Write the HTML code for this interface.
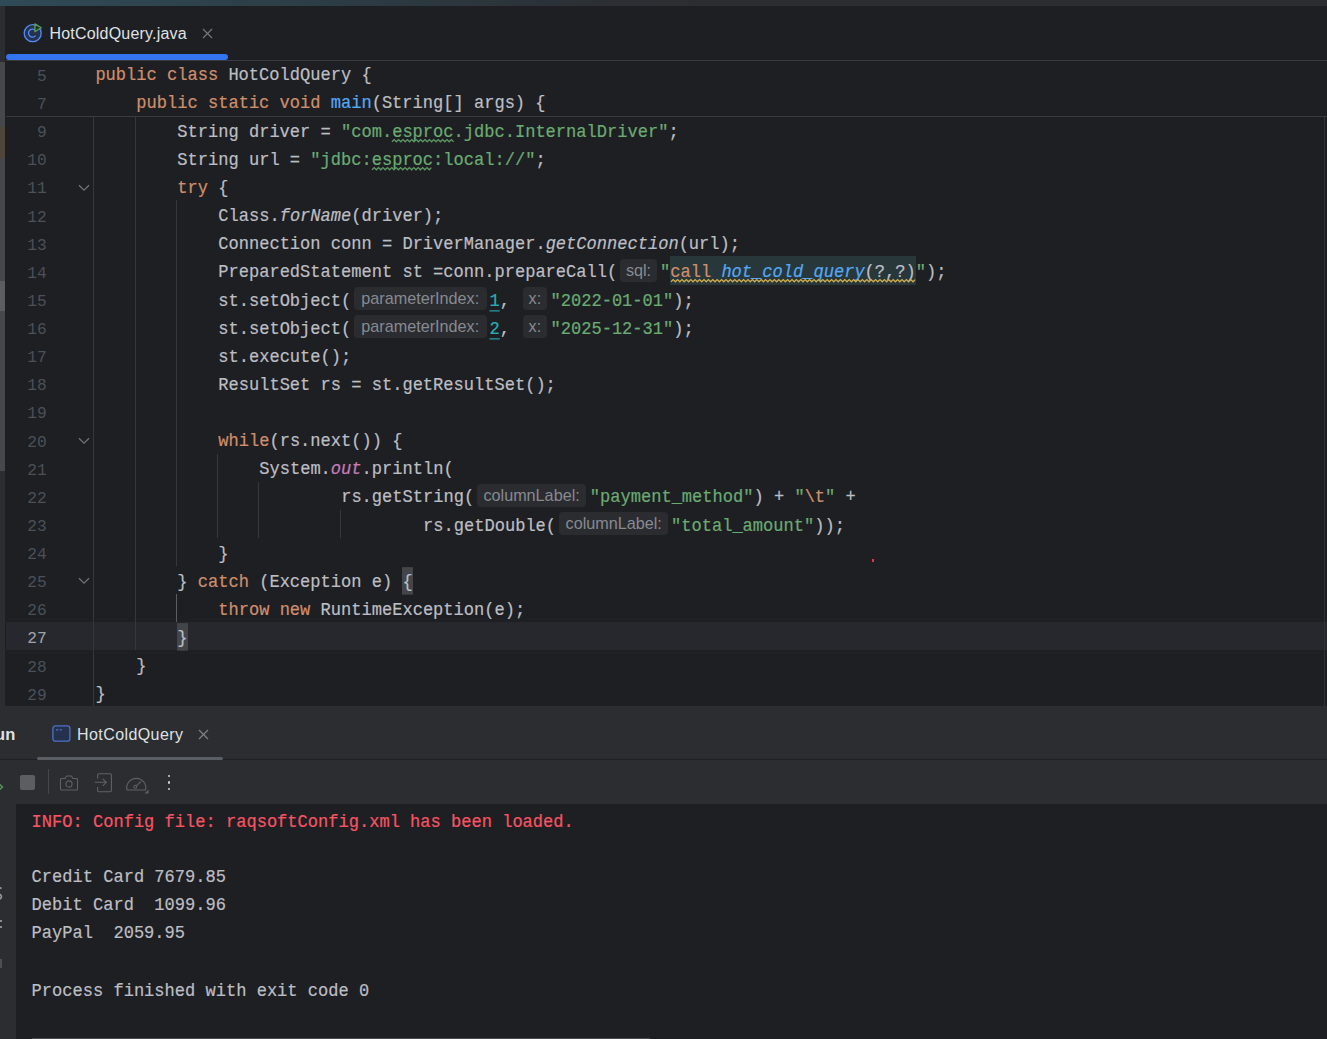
<!DOCTYPE html>
<html><head><meta charset="utf-8">
<style>
*{margin:0;padding:0;box-sizing:border-box}
html,body{width:1327px;height:1039px;overflow:hidden;background:#1e1f22}
body{position:relative;font-family:"Liberation Sans",sans-serif}
.abs{position:absolute}
#top{position:absolute;left:0;top:0;width:1327px;height:6px;background:linear-gradient(90deg,#2f4b57 0,#2d3e46 300px,#2b2f33 620px,#2b2d30 800px)}
#tabs{position:absolute;left:6px;top:6px;width:1321px;height:55px;background:#1e1f22;border-bottom:1px solid #393b40}
#tabbar{position:absolute;left:6px;top:54px;width:222px;height:6px;background:#3574f0;border-radius:3px}
#tabtext{position:absolute;left:49.5px;top:23px;letter-spacing:0.2px;font-size:16px;color:#dfe1e5;line-height:22px;white-space:pre}
#editor{position:absolute;left:0px;top:61px;width:1327px;height:645px;background:#1e1f22;overflow:hidden}
.row{position:absolute;left:6px;width:1321px;height:28.125px}
.row.cur{background:#26282e}
.ln{position:absolute;left:0;top:3.4px;width:40.8px;text-align:right;font-family:"Liberation Mono",monospace;font-size:16.2px;line-height:28.125px;color:#4b5059;transform:scaleY(1.07);transform-origin:0 18.6px}
.row.cur .ln{color:#a1a3ab}
.seg{position:absolute;top:3.1px;height:28.125px;white-space:pre;font-family:"Liberation Mono",monospace;font-size:17.06px;line-height:28.125px;color:#bcbec4;transform:scaleY(1.1);transform-origin:0 18.6px;-webkit-text-stroke:0.2px currentColor}
.k{color:#cf8e6d} .s{color:#6aab73} .f{color:#56a8f5} .i{font-style:italic} .p{color:#c77dbb;font-style:italic} .n{color:#2aacb8;text-decoration:underline;text-decoration-thickness:1px;text-underline-offset:3.5px}
.fi{color:#56a8f5;font-style:italic}
.bh{background:#43454a;display:inline-block;height:25.5px;vertical-align:top;margin-top:-0.2px}
.typo{text-decoration:underline wavy #6f8f72;text-decoration-thickness:1px;text-underline-offset:4px}
.wv{text-decoration:underline wavy #c9a84a;text-decoration-thickness:1px;text-underline-offset:4px}
.inl{position:absolute;margin-left:-6px;top:2.6px;height:22.8px;border-radius:4px;background:#2b2c30;color:#868a91;font-size:16.2px;line-height:23px;text-align:center;white-space:pre}
.inj{position:absolute;margin-left:-6px;top:0;height:28.2px;background:#283739}
.g{position:absolute;width:1px}
.chev{position:absolute;left:77.8px}
#sticky{position:absolute;left:0;top:0;width:1327px;height:56px;background:#1e1f22;border-bottom:1px solid #393b40}
#lstrip{position:absolute;left:0;top:6px;width:5px;height:700px;background:linear-gradient(180deg,#2b2d30 0,#2b2d30 55.7px,#46484c 55.7px,#46484c 121px,#4f473a 121px,#4f473a 151.5px,#46484c 151.5px,#46484c 274.7px,#5b5d61 274.7px,#5b5d61 305.5px,#46484c 305.5px,#46484c 465px,#2b2d30 465px)}
#lgap{position:absolute;left:5px;top:6px;width:1px;height:700px;background:#1e1f22}
#vscroll{position:absolute;left:1324px;top:117px;width:1px;height:589px;background:#303236}
#tw{position:absolute;left:0;top:706px;width:1327px;height:98px;background:#2b2d30}
#console{position:absolute;left:16px;top:804px;width:1311px;height:235px;background:#1e1f22}
#hscroll{position:absolute;left:32px;top:1037.5px;width:618px;height:1.5px;background:#4a4b4f}
.twtxt{position:absolute;font-size:16px;color:#dfe1e5;line-height:22px;white-space:pre}
#cstrip{position:absolute;left:0;top:804px;width:16px;height:235px;background:#2b2d30}
.cl{position:absolute;left:15.6px;white-space:pre;font-family:"Liberation Mono",monospace;font-size:17.06px;line-height:28.125px;color:#bcbec4;transform:scaleY(1.1);transform-origin:0 18.6px;-webkit-text-stroke:0.2px currentColor}
.cl.red{color:#f75464}
</style></head><body>
<div id="top"></div>
<div id="tabs"></div>
<svg class="abs" style="left:22px;top:21px" width="22" height="22" viewBox="0 0 22 22">
<circle cx="10.7" cy="12.2" r="8.5" fill="#25324d" stroke="#548af7" stroke-width="1.3"/>
<path d="M13.6 9.6 A4 4 0 1 0 13.6 14.6" fill="none" stroke="#548af7" stroke-width="1.3"/>
<path d="M12.9 2.9 L19.3 6.8 L12.9 10.7 Z" fill="#223425" stroke="#5a9e5e" stroke-width="1.3" stroke-linejoin="round"/>
</svg>
<div id="tabtext">HotColdQuery.java</div>
<svg class="abs" style="left:202px;top:28px" width="11" height="11" viewBox="0 0 11 11"><path d="M1 1L10 10M10 1L1 10" stroke="#76787d" stroke-width="1.1"/></svg>
<div id="tabbar"></div>
<div id="editor">
<div style="position:absolute;left:0;top:-61px;width:1327px;height:706px">
<div class="row" style="top:115.75px"><div class="ln">9</div><div class="seg" style="left:171.32px">String driver = <span class="s">"com.</span><span class="s">esproc</span><span class="s">.jdbc.InternalDriver"</span>;</div></div><div class="row" style="top:143.875px"><div class="ln">10</div><div class="seg" style="left:171.32px">String url = <span class="s">"jdbc:</span><span class="s">esproc</span><span class="s">:local://"</span>;</div></div><div class="row" style="top:172.0px"><div class="ln">11</div><div class="seg" style="left:171.32px"><span class="k">try</span> {</div></div><div class="row" style="top:200.125px"><div class="ln">12</div><div class="seg" style="left:212.28px">Class.<span class="i">forName</span>(driver);</div></div><div class="row" style="top:228.25px"><div class="ln">13</div><div class="seg" style="left:212.28px">Connection conn = DriverManager.<span class="i">getConnection</span>(url);</div></div><div class="row" style="top:256.375px"><div class="ln">14</div><div class="seg" style="left:212.28px">PreparedStatement st =conn.prepareCall(</div><div class="inl" style="left:620px;width:37px">sql:</div><div class="inj" style="left:670.2px;width:245.8px"></div><div class="seg" style="left:654.00px"><span class="s">"</span><span class="k">call</span> <span class="fi">hot_cold_query</span>(?,?)<span class="s">"</span>);</div></div><div class="row" style="top:284.5px"><div class="ln">15</div><div class="seg" style="left:212.28px">st.setObject(</div><div class="inl" style="left:354px;width:132.5px">parameterIndex:</div><div class="seg" style="left:483.50px"><span class="n">1</span>, </div><div class="inl" style="left:523px;width:23.7px">x:</div><div class="seg" style="left:544.50px"><span class="s">"2022-01-01"</span>);</div></div><div class="row" style="top:312.625px"><div class="ln">16</div><div class="seg" style="left:212.28px">st.setObject(</div><div class="inl" style="left:354px;width:132.5px">parameterIndex:</div><div class="seg" style="left:483.50px"><span class="n">2</span>, </div><div class="inl" style="left:523px;width:23.7px">x:</div><div class="seg" style="left:544.50px"><span class="s">"2025-12-31"</span>);</div></div><div class="row" style="top:340.75px"><div class="ln">17</div><div class="seg" style="left:212.28px">st.execute();</div></div><div class="row" style="top:368.875px"><div class="ln">18</div><div class="seg" style="left:212.28px">ResultSet rs = st.getResultSet();</div></div><div class="row" style="top:397.0px"><div class="ln">19</div></div><div class="row" style="top:425.125px"><div class="ln">20</div><div class="seg" style="left:212.28px"><span class="k">while</span>(rs.next()) {</div></div><div class="row" style="top:453.25px"><div class="ln">21</div><div class="seg" style="left:253.24px">System.<span class="p">out</span>.println(</div></div><div class="row" style="top:481.375px"><div class="ln">22</div><div class="seg" style="left:335.16px">rs.getString(</div><div class="inl" style="left:477.2px;width:108.8px">columnLabel:</div><div class="seg" style="left:583.80px"><span class="s">"payment_method"</span>) + <span class="s">"</span><span class="k">\t</span><span class="s">"</span> +</div></div><div class="row" style="top:509.5px"><div class="ln">23</div><div class="seg" style="left:417.08px">rs.getDouble(</div><div class="inl" style="left:559.3px;width:108.8px">columnLabel:</div><div class="seg" style="left:665.00px"><span class="s">"total_amount"</span>));</div></div><div class="row" style="top:537.625px"><div class="ln">24</div><div class="seg" style="left:212.28px">}</div></div><div class="row" style="top:565.75px"><div class="ln">25</div><div class="seg" style="left:171.32px">} <span class="k">catch</span> (Exception e) <span class="bh">{</span></div></div><div class="row" style="top:593.875px"><div class="ln">26</div><div class="seg" style="left:212.28px"><span class="k">throw new </span>RuntimeException(e);</div></div><div class="row cur" style="top:622.0px"><div class="ln">27</div><div class="seg" style="left:171.32px"><span class="bh">}</span></div></div><div class="row" style="top:650.125px"><div class="ln">28</div><div class="seg" style="left:130.36px">}</div></div><div class="row" style="top:678.25px"><div class="ln">29</div><div class="seg" style="left:89.40px">}</div></div>
<div class="g" style="left:92.5px;top:117px;height:589px;background:#35373b"></div><div class="g" style="left:134.7px;top:117px;height:533px;background:#35373b"></div><div class="g" style="left:175.6px;top:200px;height:366px;background:#35373b"></div><div class="g" style="left:175.6px;top:594px;height:28px;background:#5b5e63"></div><div class="g" style="left:216.5px;top:454px;height:84px;background:#35373b"></div><div class="g" style="left:257.5px;top:482px;height:56px;background:#35373b"></div><div class="g" style="left:340px;top:510px;height:28px;background:#35373b"></div>
<svg class="chev" style="top:183.5px" width="12" height="8" viewBox="0 0 12 8"><path d="M1 1.2 L6 6.2 L11 1.2" fill="none" stroke="#6f737a" stroke-width="1.3"/></svg><svg class="chev" style="top:436.625px" width="12" height="8" viewBox="0 0 12 8"><path d="M1 1.2 L6 6.2 L11 1.2" fill="none" stroke="#6f737a" stroke-width="1.3"/></svg><svg class="chev" style="top:577.25px" width="12" height="8" viewBox="0 0 12 8"><path d="M1 1.2 L6 6.2 L11 1.2" fill="none" stroke="#6f737a" stroke-width="1.3"/></svg>
<svg class="abs" style="left:392px;top:139.15px;overflow:visible" width="62.0" height="3.4"><path d="M0.00 2.80 L2.20 0.60 L4.40 2.80 L6.60 0.60 L8.80 2.80 L11.00 0.60 L13.20 2.80 L15.40 0.60 L17.60 2.80 L19.80 0.60 L22.00 2.80 L24.20 0.60 L26.40 2.80 L28.60 0.60 L30.80 2.80 L33.00 0.60 L35.20 2.80 L37.40 0.60 L39.60 2.80 L41.80 0.60 L44.00 2.80 L46.20 0.60 L48.40 2.80 L50.60 0.60 L52.80 2.80 L55.00 0.60 L57.20 2.80 L59.40 0.60 L61.60 2.80" fill="none" stroke="#5e9a65" stroke-width="1.3"/></svg><svg class="abs" style="left:371.5px;top:167.28px;overflow:visible" width="61.5" height="3.4"><path d="M0.00 2.80 L2.20 0.60 L4.40 2.80 L6.60 0.60 L8.80 2.80 L11.00 0.60 L13.20 2.80 L15.40 0.60 L17.60 2.80 L19.80 0.60 L22.00 2.80 L24.20 0.60 L26.40 2.80 L28.60 0.60 L30.80 2.80 L33.00 0.60 L35.20 2.80 L37.40 0.60 L39.60 2.80 L41.80 0.60 L44.00 2.80 L46.20 0.60 L48.40 2.80 L50.60 0.60 L52.80 2.80 L55.00 0.60 L57.20 2.80 L59.40 0.60" fill="none" stroke="#5e9a65" stroke-width="1.3"/></svg><svg class="abs" style="left:670.5px;top:279.17px;overflow:visible" width="244.5" height="3.4"><path d="M0.00 2.80 L2.20 0.60 L4.40 2.80 L6.60 0.60 L8.80 2.80 L11.00 0.60 L13.20 2.80 L15.40 0.60 L17.60 2.80 L19.80 0.60 L22.00 2.80 L24.20 0.60 L26.40 2.80 L28.60 0.60 L30.80 2.80 L33.00 0.60 L35.20 2.80 L37.40 0.60 L39.60 2.80 L41.80 0.60 L44.00 2.80 L46.20 0.60 L48.40 2.80 L50.60 0.60 L52.80 2.80 L55.00 0.60 L57.20 2.80 L59.40 0.60 L61.60 2.80 L63.80 0.60 L66.00 2.80 L68.20 0.60 L70.40 2.80 L72.60 0.60 L74.80 2.80 L77.00 0.60 L79.20 2.80 L81.40 0.60 L83.60 2.80 L85.80 0.60 L88.00 2.80 L90.20 0.60 L92.40 2.80 L94.60 0.60 L96.80 2.80 L99.00 0.60 L101.20 2.80 L103.40 0.60 L105.60 2.80 L107.80 0.60 L110.00 2.80 L112.20 0.60 L114.40 2.80 L116.60 0.60 L118.80 2.80 L121.00 0.60 L123.20 2.80 L125.40 0.60 L127.60 2.80 L129.80 0.60 L132.00 2.80 L134.20 0.60 L136.40 2.80 L138.60 0.60 L140.80 2.80 L143.00 0.60 L145.20 2.80 L147.40 0.60 L149.60 2.80 L151.80 0.60 L154.00 2.80 L156.20 0.60 L158.40 2.80 L160.60 0.60 L162.80 2.80 L165.00 0.60 L167.20 2.80 L169.40 0.60 L171.60 2.80 L173.80 0.60 L176.00 2.80 L178.20 0.60 L180.40 2.80 L182.60 0.60 L184.80 2.80 L187.00 0.60 L189.20 2.80 L191.40 0.60 L193.60 2.80 L195.80 0.60 L198.00 2.80 L200.20 0.60 L202.40 2.80 L204.60 0.60 L206.80 2.80 L209.00 0.60 L211.20 2.80 L213.40 0.60 L215.60 2.80 L217.80 0.60 L220.00 2.80 L222.20 0.60 L224.40 2.80 L226.60 0.60 L228.80 2.80 L231.00 0.60 L233.20 2.80 L235.40 0.60 L237.60 2.80 L239.80 0.60 L242.00 2.80 L244.20 0.60" fill="none" stroke="#d1ae4e" stroke-width="1.3"/></svg>
</div>
<div id="sticky"><div style="position:absolute;left:0;top:-61px"><div class="row" style="top:59.3px"><div class="ln">5</div><div class="seg" style="left:89.40px"><span class="k">public class </span>HotColdQuery {</div></div><div class="row" style="top:87.3px"><div class="ln">7</div><div class="seg" style="left:130.36px"><span class="k">public static void </span><span class="f">main</span>(String[] args) {</div></div></div></div>
</div>
<div id="vscroll"></div>
<div id="lstrip"></div><div id="lgap"></div>
<div class="abs" style="left:871.7px;top:558.8px;width:2.8px;height:3.2px;background:#e8353f"></div>
<div id="tw"></div>
<div class="abs" style="left:0;top:759px;width:1327px;height:1px;background:#1e1f22"></div>
<div class="abs twtxt" style="left:-16.8px;top:722.7px;font-weight:bold;font-size:16.5px">Run</div>
<svg class="abs" style="left:52px;top:725px" width="19" height="17" viewBox="0 0 19 17"><rect x="0.9" y="0.9" width="17" height="15.3" rx="2.5" fill="#25324d" stroke="#4c71c7" stroke-width="1.3"/><rect x="4" y="4.2" width="2.2" height="1.3" fill="#4c71c7"/><rect x="7.6" y="4.2" width="2.2" height="1.3" fill="#4c71c7"/></svg>
<div class="abs twtxt" style="left:77px;top:723.6px;letter-spacing:0.42px">HotColdQuery</div>
<svg class="abs" style="left:198px;top:729px" width="11" height="11" viewBox="0 0 11 11"><path d="M1 1L10 10M10 1L1 10" stroke="#7f8186" stroke-width="1.2"/></svg>
<div class="abs" style="left:36.5px;top:757px;width:186px;height:3px;border-radius:1.5px;background:#5a5d63"></div>
<svg class="abs" style="left:-3px;top:782px" width="8" height="10" viewBox="0 0 8 10"><path d="M1 1 L5.5 5 L1 9" fill="none" stroke="#57965c" stroke-width="1.4"/></svg>
<div class="abs" style="left:20px;top:775px;width:15px;height:15px;border-radius:2px;background:#5d5e60"></div>
<div class="abs" style="left:48px;top:769px;width:1px;height:25px;background:#45474b"></div>
<svg class="abs" style="left:59px;top:773px" width="20" height="19" viewBox="0 0 20 19"><path d="M2.5 5.5 h3.5 l1.6-2.5 h4.8 l1.6 2.5 h3.5 a1 1 0 0 1 1 1 v9.5 a1 1 0 0 1 -1 1 h-15 a1 1 0 0 1 -1-1 v-9.5 a1 1 0 0 1 1-1z" fill="none" stroke="#5f6166" stroke-width="1.1"/><circle cx="10" cy="11" r="3.1" fill="none" stroke="#5f6166" stroke-width="1.1"/></svg>
<svg class="abs" style="left:94px;top:773px" width="19" height="20" viewBox="0 0 19 20"><path d="M3.6 5.6 v-3.6 a1.2 1.2 0 0 1 1.2-1.2 h11.4 a1.2 1.2 0 0 1 1.2 1.2 v15.6 a1.2 1.2 0 0 1 -1.2 1.2 h-11.4 a1.2 1.2 0 0 1 -1.2-1.2 v-3.6" fill="none" stroke="#5f6166" stroke-width="1.1"/><path d="M0.8 9.3 h11.5 M8.8 5.8 L12.3 9.3 L8.8 12.8" fill="none" stroke="#5f6166" stroke-width="1.1"/></svg>
<svg class="abs" style="left:125px;top:774px" width="24" height="20" viewBox="0 0 24 20"><path d="M2 16 A9.5 9.5 0 1 1 20.5 16 Z" fill="none" stroke="#5f6166" stroke-width="1.1" stroke-linejoin="round"/><circle cx="10.3" cy="12.8" r="1.5" fill="none" stroke="#5f6166" stroke-width="1.1"/><path d="M11.5 11.7 L16 7.5" stroke="#5f6166" stroke-width="1.1"/><path d="M23.5 15.5 L23.5 19.5 L19.5 19.5 Z" fill="#5f6166"/></svg>
<div class="abs" style="left:167.5px;top:774.8px;width:2.6px;height:2.6px;border-radius:50%;background:#ced0d6"></div>
<div class="abs" style="left:167.5px;top:781.2px;width:2.6px;height:2.6px;border-radius:50%;background:#ced0d6"></div>
<div class="abs" style="left:167.5px;top:787.5px;width:2.6px;height:2.6px;border-radius:50%;background:#ced0d6"></div>
<div id="cstrip"></div>
<div id="console"><div class="cl red" style="top:5.399999999999977px">INFO: Config file: raqsoftConfig.xml has been loaded.</div><div class="cl " style="top:60.200000000000045px">Credit Card 7679.85</div><div class="cl " style="top:88.29999999999995px">Debit Card  1099.96</div><div class="cl " style="top:116.39999999999998px">PayPal  2059.95</div><div class="cl " style="top:174.20000000000005px">Process finished with exit code 0</div></div>
<div id="hscroll"></div>
<svg class="abs" style="left:-6px;top:886px" width="9" height="15" viewBox="0 0 9 15"><path d="M7.5 2.5 Q4 0.5 1.5 3 Q0 5.5 4.5 7.5 Q8.5 9.5 7 12 Q4.5 14.5 1 12.5" fill="none" stroke="#9a9ca0" stroke-width="1.6"/></svg>
<div class="abs" style="left:0;top:920px;width:2px;height:2px;background:#8a8c90"></div><div class="abs" style="left:0;top:926px;width:2px;height:2px;background:#8a8c90"></div>
<div class="abs" style="left:0;top:959px;width:2px;height:9px;background:#4e5054"></div>
</body></html>
